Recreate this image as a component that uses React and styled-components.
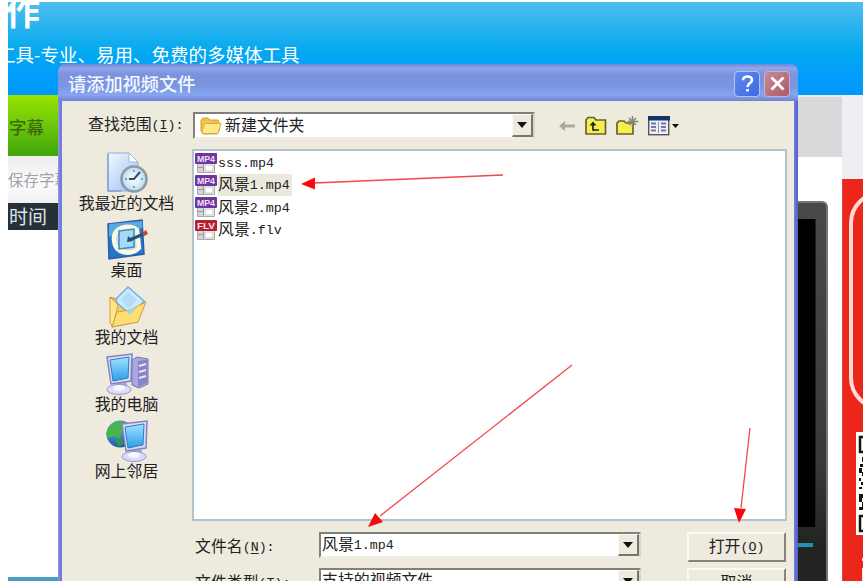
import styled, { createGlobalStyle } from "styled-components";

const places = [
  { id: 1, name: "我最近的文档", Icon: RecentIcon },
  { id: 2, name: "桌面", Icon: DesktopIcon },
  { id: 3, name: "我的文档", Icon: DocumentsIcon },
  { id: 4, name: "我的电脑", Icon: ComputerIcon },
  { id: 5, name: "网上邻居", Icon: NetworkIcon },
];

const files = [
  { id: 1, name: "", ext: "sss.mp4", type: "MP4" },
  { id: 2, name: "风景", ext: "1.mp4", type: "MP4", selected: true },
  { id: 3, name: "风景", ext: "2.mp4", type: "MP4" },
  { id: 4, name: "风景", ext: ".flv", type: "FLV" },
];

const App = () => {
  return (
    <>
      <GlobalStyle />
      <Frame>
        <Desk>
          <Page />
          <OpenDialog />
          <Arrows />
        </Desk>
      </Frame>
    </>
  );
};

export default App;

const Page = () => (
  <>
    <Header>
      <Logo>作</Logo>
      <Slogan>工具-专业、易用、免费的多媒体工具</Slogan>
    </Header>
    <Columns>
      <LeftColumn>
        <GreenTab>字幕</GreenTab>
        <SaveBar>保存字幕</SaveBar>
        <TimeHead>时间</TimeHead>
        <BlueLine />
      </LeftColumn>
      <PlayerColumn>
        <PlayerTop />
        <Player>
          <PlayerScreen />
          <SeekBar />
        </Player>
      </PlayerColumn>
      <AdColumn>
        <Ad>
          <AdOutline />
          <QrCode />
        </Ad>
      </AdColumn>
    </Columns>
  </>
);

const OpenDialog = () => (
  <Dialog>
    <TitleBar>
      <Title>请添加视频文件</Title>
      <TitleButton>
        <svg width="17" height="19" viewBox="0 0 17 19">
          <path
            d="M4 6.2C4 1.2 13 1.4 13 6c0 3-4.5 3.200-4.500 7M8.500 15v2.600"
            fill="none"
            stroke="#fff"
            strokeWidth="2.700"
          />
        </svg>
      </TitleButton>
      <TitleButton $close>
        <svg width="17" height="17" viewBox="0 0 17 17">
          <path
            d="M2.500 2.500l12 12M14.500 2.500l-12 12"
            stroke="#fff"
            strokeWidth="2.800"
          />
        </svg>
      </TitleButton>
    </TitleBar>
    <DialogBody>
      <LookIn>
        <LookLabel>
          查找范围
          <Latin>
            (<u>I</u>):
          </Latin>
        </LookLabel>
        <Combo $width={342} $height={27}>
          <FolderIcon />
          <ComboText>新建文件夹</ComboText>
          <DropButton />
        </Combo>
        <Tools />
      </LookIn>
      <Main>
        <Places>
          {places.map(({ id, name, Icon }) => (
            <Place key={id}>
              <Icon />
              <PlaceName>{name}</PlaceName>
            </Place>
          ))}
        </Places>
        <FileList>
          {files.map((file) => (
            <FileRow key={file.id}>
              <FileIcon type={file.type} />
              <FileName $selected={file.selected}>
                {file.name}
                <Latin>{file.ext}</Latin>
              </FileName>
            </FileRow>
          ))}
        </FileList>
      </Main>
      <Fields>
        <Field>
          <FieldLabel>
            文件名
            <Latin>
              (<u>N</u>):
            </Latin>
          </FieldLabel>
          <Combo $width={322} $height={26}>
            <ComboText>
              风景<Latin>1.mp4</Latin>
            </ComboText>
            <DropButton />
          </Combo>
          <PushButton>
            打开
            <Latin>
              (<u>O</u>)
            </Latin>
          </PushButton>
        </Field>
        <Field>
          <FieldLabel>
            文件类型
            <Latin>
              (<u>T</u>):
            </Latin>
          </FieldLabel>
          <Combo $width={322} $height={26}>
            <ComboText>支持的视频文件</ComboText>
            <DropButton />
          </Combo>
          <PushButton>取消</PushButton>
        </Field>
      </Fields>
    </DialogBody>
  </Dialog>
);

function Arrows() {
  return (
    <ArrowLayer width="855" height="579" viewBox="8 2 855 579">
      <g stroke="#f2474a" strokeWidth="1.300">
        <path d="M314 183L503 175" />
        <path d="M572 365L380 516" />
        <path d="M750 428L741 508" />
      </g>
      <g fill="#f8080c">
        <path d="M301 184l14-6.500v12z" />
        <path d="M368 527l7-14 8 9z" />
        <path d="M739 523l-5-15 12 1z" />
      </g>
    </ArrowLayer>
  );
}

function DropButton() {
  return (
    <Drop>
      <svg width="10" height="6" viewBox="0 0 10 6">
        <path d="M0 0h10L5 6z" fill="#111" />
      </svg>
    </Drop>
  );
}

function Tools() {
  return (
    <ToolRow>
      <svg width="17" height="14" viewBox="0 0 17 14">
        <path d="M0 7l6-5v3.500h10v3H6V12z" fill="#aaa89f" />
      </svg>
      <svg width="22" height="20" viewBox="0 0 22 20">
        <path
          d="M1 18V4l2-2.500h6L11 4h9.500v14z"
          fill="#f4ee51"
          stroke="#65632c"
          strokeWidth="1.700"
        />
        <path d="M4.500 9.500L8 5.500l3.500 4z" fill="#25230c" />
        <path d="M8 8v6h6" fill="none" stroke="#25230c" strokeWidth="1.700" />
      </svg>
      <svg width="23" height="21" viewBox="0 0 23 21">
        <path
          d="M1 19V8l2-2h5l2 2h7v11z"
          fill="#f4ee51"
          stroke="#65632c"
          strokeWidth="1.700"
        />
        <path
          d="M16.500 1v11M11.500 6.500h11M13 3l7 7M20 3l-7 7"
          stroke="#85847a"
          strokeWidth="1.500"
        />
      </svg>
      <svg width="32" height="20" viewBox="0 0 32 20">
        <rect x=".7" y=".7" width="20" height="18" fill="#f1f1fa" stroke="#55535b" strokeWidth="1.400" />
        <path d="M0 0h22v4.500H0z" fill="#17336b" />
        <path
          d="M3 7.500h5M3 11h5M3 14.500h5M13 7.500h5M13 11h5M13 14.500h5"
          stroke="#7674a5"
          strokeWidth="2.200"
        />
        <path d="M10.500 6v11" stroke="#8d8ba5" />
        <path d="M24 8h7l-3.500 4z" fill="#111" />
      </svg>
    </ToolRow>
  );
}

function FolderIcon() {
  return (
    <svg width="22" height="18" viewBox="0 0 22 18">
      <path d="M1 14V3l2-2h5l2 2h8l1 2v9l-2 3H3z" fill="#efc448" stroke="#d4a02e" />
      <path d="M2 15L4.500 6.500H21L18 16.500H3z" fill="#ffe88a" stroke="#dbab3d" />
    </svg>
  );
}

function FileIcon({ type }) {
  const color = type === "MP4" ? "#7036a0" : "#b5202a";
  return (
    <svg width="22" height="21" viewBox="0 0 22 21">
      <path d="M2.500 9v10.500h17V9" fill="#f7f7f7" stroke="#aaa" />
      <path d="M3 10h5v9H3z" fill="#d6d4d7" />
      <path d="M8.500 10v9M3 14.500h6" stroke="#999" />
      <path d="M10 12h8v6h-8z" fill="#fff" stroke="#c6c6c6" />
      <rect y="0" width="22" height="11" rx="1" fill={color} />
      <text
        x="11"
        y="8.500"
        textAnchor="middle"
        textLength="18"
        lengthAdjust="spacingAndGlyphs"
        fontFamily="Liberation Sans, sans-serif"
        fontSize="9"
        fontWeight="bold"
        fill="#eee0f5"
      >
        {type}
      </text>
    </svg>
  );
}

function RecentIcon() {
  return (
    <svg width="42" height="42" viewBox="0 0 42 42">
      <defs>
        <linearGradient id="paper" x1="0" y1="0" x2="1" y2="1">
          <stop offset="0" stopColor="#f4faff" />
          <stop offset="1" stopColor="#96bdf1" />
        </linearGradient>
        <radialGradient id="clock">
          <stop offset="0" stopColor="#fff" />
          <stop offset="1" stopColor="#b5dcf3" />
        </radialGradient>
      </defs>
      <path d="M2 1h21l9 9v29H2z" fill="url(#paper)" stroke="#8eafdc" />
      <path d="M23 1v9h9z" fill="#fff" stroke="#9db9d8" />
      <path d="M2 2v37h13" fill="none" stroke="#7fa2dc" strokeWidth="1.500" />
      <circle cx="28" cy="27" r="12.500" fill="url(#clock)" stroke="#8c9aa6" strokeWidth="2.600" />
      <path d="M28 18v2M28 34v2M19 27h2M35 27h2" stroke="#6d8ca0" strokeWidth="1.500" />
      <path d="M34 20l-6 7h-5" fill="none" stroke="#334d66" strokeWidth="2" />
    </svg>
  );
}

function DesktopIcon() {
  return (
    <svg width="42" height="42" viewBox="0 0 42 42">
      <path d="M2 5l34-4 2 34-35 5z" fill="#2876c7" stroke="#225fab" strokeWidth="1.500" />
      <path d="M3 5l33-3 .5 7L3 18z" fill="#58a9e4" />
      <path
        d="M31 11c-6-6-24-4-23 10 1 15 18 15 25 8z"
        fill="#bbe1f5"
        stroke="#fbf9df"
        strokeWidth="4.500"
      />
      <path d="M13 12l15-2v18l-15 2z" fill="#a7d8f6" stroke="#4289c2" strokeWidth="1.500" />
      <path d="M23 21l15-6" stroke="#24537c" strokeWidth="3" />
      <path d="M22 17l-1 6 6-1z" fill="#224d73" />
      <path d="M36 14l4-3 2 4-4 2z" fill="#c64335" />
    </svg>
  );
}

function DocumentsIcon() {
  return (
    <svg width="42" height="42" viewBox="0 0 42 42">
      <path d="M4 11l11 4 16-1 8 2-8 20L6 41z" fill="#f6cf59" stroke="#b98d2f" />
      <path d="M10 13L22 1l16 14-13 14-14-12z" fill="#cceafd" stroke="#71b0df" strokeWidth="1.500" />
      <path d="M15 13l7-7 9 8-9 9z" fill="#b5dbf8" />
      <path d="M4 11l8 8-5 21-3-3z" fill="#ffe58b" stroke="#d4a43a" />
      <path d="M11 26l13-2 16-8-8 20L6 41z" fill="#ffdf74" stroke="#cba03b" />
      <path d="M20 25l7-3 3 1-6 6z" fill="#a8d4df" />
    </svg>
  );
}

function Monitor() {
  return (
    <>
      <path d="M10 29h10l3 8H7z" fill="#a8a4db" />
      <ellipse cx="13" cy="36.500" rx="12" ry="5" fill="#dcdcfa" stroke="#9a96cf" />
      <ellipse cx="13" cy="35" rx="6" ry="3" fill="#f7f7ff" />
      <path d="M1 4l25-3-1 27-20 3z" fill="#d6dcfb" stroke="#8582bd" strokeWidth="1.500" />
      <path d="M4 7l19-3-1 21-15 3z" fill="url(#screen)" stroke="#347bba" />
    </>
  );
}

function ComputerIcon() {
  return (
    <svg width="44" height="42" viewBox="0 0 44 42">
      <defs>
        <linearGradient id="screen" x1="0" y1="0" x2="0" y2="1">
          <stop offset="0" stopColor="#a3e2ff" />
          <stop offset="1" stopColor="#289fea" />
        </linearGradient>
      </defs>
      <path d="M27 7l5-3 11 2v25l-9 4-7-3z" fill="#aaa6df" stroke="#7a75b2" />
      <path d="M33 8l9-1v23l-9 4z" fill="#8884c4" />
      <path d="M34 13l7-2M34 19l7-2M34 25l7-2" stroke="#e4e2ff" strokeWidth="2.200" />
      <g transform="translate(1 0)">
        <Monitor />
      </g>
    </svg>
  );
}

function NetworkIcon() {
  return (
    <svg width="44" height="42" viewBox="0 0 44 42">
      <defs>
        <radialGradient id="globe" cx=".35" cy=".25" r=".8">
          <stop offset="0" stopColor="#5fb8e6" />
          <stop offset="1" stopColor="#174fa7" />
        </radialGradient>
      </defs>
      <circle cx="15" cy="14" r="13.500" fill="url(#globe)" />
      <path d="M5 6c5-6 14-6 18-2l-6 6-2 9-6-3-6 2-2-5z" fill="#49b44a" />
      <path d="M10 18l6 1 3 5-6 3z" fill="#34974b" />
      <g transform="translate(16 0)">
        <Monitor />
      </g>
    </svg>
  );
}

function QrCode() {
  return (
    <Qr width="8" height="149" viewBox="855 432 8 149">
      <path d="M855 432h8v103h-8z" fill="#fff" />
      <path
        d="M863 437h-4v15h4M863 516h-4v15h4"
        fill="none"
        stroke="#151515"
        strokeWidth="2.500"
      />
      <path
        d="M861 457h2v5h-2zM859 464h4v3h-4zM858 468h3v5h-3zM861 472h2v4h-2zM858 478h2v3h-2zM860 482h3v3h-3zM858 487h3v2h-3zM858 494h5v4h-5zM858 498h3v4h-3zM861 502h2v8h-2zM858 507h3v3h-3z"
        fill="#151515"
      />
      <path d="M861 558h2v3h-2zM861 568h2v13h-2z" fill="#fbe0dd" />
    </Qr>
  );
}

const GlobalStyle = createGlobalStyle`
  * {
    box-sizing: border-box;
  }

  body {
    margin: 0;
    background: #fff;
    overflow: hidden;
  }

  svg {
    display: block;
    flex-shrink: 0;
  }
`;

const Frame = styled.div`
  width: 865px;
  height: 584px;
  padding: 2px 2px 3px 8px;
  background: #fff;
`;

const Desk = styled.div`
  position: relative;
  display: flex;
  flex-direction: column;
  height: 579px;
  overflow: hidden;
  white-space: nowrap;
  color: #222;
  font-family: "Noto Sans CJK SC", sans-serif;
  font-size: 15.9px;
`;

const Header = styled.div`
  height: 93px;
  flex-shrink: 0;
  overflow: hidden;
  background: linear-gradient(#50bef0, #04a9ee 52%, #009dfb 80%, #0098fb);
  color: #fff;
`;

const Logo = styled.div`
  height: 39px;
  margin-left: -2px;
  margin-top: -10px;
  font-size: 34px;
  font-weight: 700;
  line-height: 37px;
`;

const Slogan = styled.div`
  margin-left: -11px;
  margin-top: 9px;
  font-size: 18.5px;
  line-height: 28px;
`;

const Columns = styled.div`
  display: flex;
  flex: 1;
  min-height: 0;
`;

const LeftColumn = styled.div`
  display: flex;
  flex-direction: column;
  flex-shrink: 0;
  width: 60px;
`;

const GreenTab = styled.div`
  height: 61px;
  padding-left: 1px;
  background: linear-gradient(#99e400, #6cc60a 50%, #3fa408);
  color: #396d0c;
  font-size: 17.5px;
  font-weight: 500;
  line-height: 63px;
`;

const SaveBar = styled.div`
  height: 47px;
  background: linear-gradient(#eeedf0, #fbfafc 60%, #f0eff2);
  color: #a3a1a5;
  font-size: 15.5px;
  line-height: 47px;
`;

const TimeHead = styled.div`
  height: 27px;
  padding-left: 1px;
  background: #263039;
  color: #dfe3e6;
  font-size: 19px;
  line-height: 26px;
`;

const BlueLine = styled.div`
  height: 4px;
  margin-top: auto;
  background: #4a9cc1;
`;

const PlayerColumn = styled.div`
  display: flex;
  flex-direction: column;
  flex-shrink: 0;
  width: 44px;
  margin-left: 730px;
`;

const PlayerTop = styled.div`
  height: 62px;
  background: #dad8db;
  border-top: 2px solid #ebeaec;
`;

const Player = styled.div`
  display: flex;
  flex-direction: column;
  flex: 1;
  width: 30px;
  margin-top: 44px;
  padding-top: 16px;
  border: solid #747574;
  border-width: 2px 2px 0 0;
  border-radius: 0 6px 0 0;
  background: linear-gradient(#484a48, #383938 70%, #222422 90%);
`;

const PlayerScreen = styled.div`
  width: 18px;
  height: 308px;
  background: #000;
  border-right: 1px solid #222;
`;

const SeekBar = styled.div`
  width: 15px;
  height: 4px;
  margin-top: 16px;
  background: #258fb6;
`;

const AdColumn = styled.div`
  flex: 1;
  min-width: 0;
  padding-top: 84px;
  background: #efeef2;
`;

const Ad = styled.div`
  height: 402px;
  padding: 12px 0 0 6px;
  overflow: hidden;
  background: #ec261b;
  border-left: 1px solid #d84b43;
`;

const AdOutline = styled.div`
  width: 64px;
  height: 219px;
  border: 4px solid #fbdad8;
  border-radius: 34px;
`;

const Qr = styled.svg`
  margin-top: 22px;
  margin-left: 7px;
`;

const Dialog = styled.div`
  position: absolute;
  left: 50px;
  top: 62px;
  width: 740px;
  height: 540px;
  padding: 0 4px;
  border-radius: 8px 8px 0 0;
  background: linear-gradient(
    90deg,
    #8f9ae4,
    #6775d6 3px,
    #8d9ae4 5px,
    #8d9ae4 735px,
    #6573d8 737px,
    #555fc6
  );
`;

const TitleBar = styled.div`
  display: flex;
  align-items: center;
  height: 37px;
  margin: 0 -4px;
  padding: 2px 8px 0 10px;
  border-radius: 8px 8px 0 0;
  background: linear-gradient(
    #6f84d6,
    #91a7ec 4px,
    #7b92df 10px,
    #7a96e0 22px,
    #86a5f0 31px,
    #6f83cf
  );
`;

const Title = styled.div`
  flex: 1;
  padding-bottom: 2px;
  color: #f4f7ff;
  font-size: 18.2px;
  font-weight: 500;
`;

const TitleButton = styled.div`
  display: flex;
  align-items: center;
  justify-content: center;
  width: 26px;
  height: 26px;
  margin-left: 4px;
  border: 1.5px solid ${(props) => (props.$close ? "#c9b1d3" : "#b2c5f8")};
  border-radius: 4px;
  background: ${(props) =>
    props.$close
      ? "linear-gradient(135deg, #c48b97, #ae5a67)"
      : "linear-gradient(135deg, #6289ef, #3d67e3)"};
`;

const DialogBody = styled.div`
  height: 500px;
  padding-top: 11px;
  background: #eeeade;
`;

const LookIn = styled.div`
  display: flex;
  align-items: center;
  height: 27px;
`;

const LookLabel = styled.div`
  width: 131px;
  padding-left: 26px;
  padding-bottom: 5px;
`;

const Latin = styled.span`
  font-family: "Liberation Mono", monospace;
  font-size: 13.3px;
  vertical-align: 1px;

  u {
    text-underline-offset: 2px;
  }
`;

const Combo = styled.div`
  display: flex;
  align-items: center;
  width: ${(props) => props.$width}px;
  height: ${(props) => props.$height}px;
  padding-left: 1px;
  background: #fff;
  border: 2px solid;
  border-color: #82807a #d8d5ca #efede5 #82807a;

  > svg {
    margin-left: 4px;
    margin-right: 3px;
  }
`;

const ComboText = styled.div`
  flex: 1;
  height: 24px;
  line-height: 22px;
`;

const Drop = styled.div`
  display: flex;
  align-items: center;
  justify-content: center;
  width: 21px;
  height: 100%;
  background: #eeeade;
  border: solid;
  border-width: 1px 2px 2px 1px;
  border-color: #faf9f5 #77756d #77756d #faf9f5;
`;

const ToolRow = styled.div`
  display: flex;
  align-items: center;
  gap: 9px;
  margin-left: 24px;
`;

const Main = styled.div`
  display: flex;
  height: 372px;
  margin-top: 10px;
`;

const Places = styled.div`
  width: 130px;
  padding-top: 3px;
`;

const Place = styled.div`
  display: flex;
  flex-direction: column;
  align-items: center;
  height: 67px;
  padding-right: 1px;
`;

const PlaceName = styled.div`
  height: 22px;
  line-height: 22px;
  margin-top: -2px;
`;

const FileList = styled.div`
  width: 595px;
  padding: 1px 0 0 1px;
  border: 2px solid #b3c3cd;
  background: #fff;
`;

const FileRow = styled.div`
  display: flex;
  align-items: center;
  height: 22.3px;
  gap: 1px;
`;

const FileName = styled.div`
  height: 22px;
  padding-right: 2px;
  line-height: 19px;
  background: ${(props) => (props.$selected ? "#ebe8dc" : "transparent")};
`;

const Fields = styled.div`
  display: flex;
  flex-direction: column;
  gap: 6px;
  padding-left: 132px;
  padding-top: 11px;
`;

const Field = styled.div`
  display: flex;
  align-items: flex-start;
  height: 30px;
`;

const FieldLabel = styled.div`
  width: 125px;
  padding-left: 1px;
  line-height: 28px;
`;

const PushButton = styled.div`
  width: 99px;
  height: 30px;
  margin-left: 46px;
  border: 2px solid;
  border-color: #faf9f5 #85837b #85837b #faf9f5;
  background: #eeeade;
  line-height: 24px;
  text-align: center;
`;

const ArrowLayer = styled.svg`
  position: absolute;
  left: 0;
  top: 0;
`;
